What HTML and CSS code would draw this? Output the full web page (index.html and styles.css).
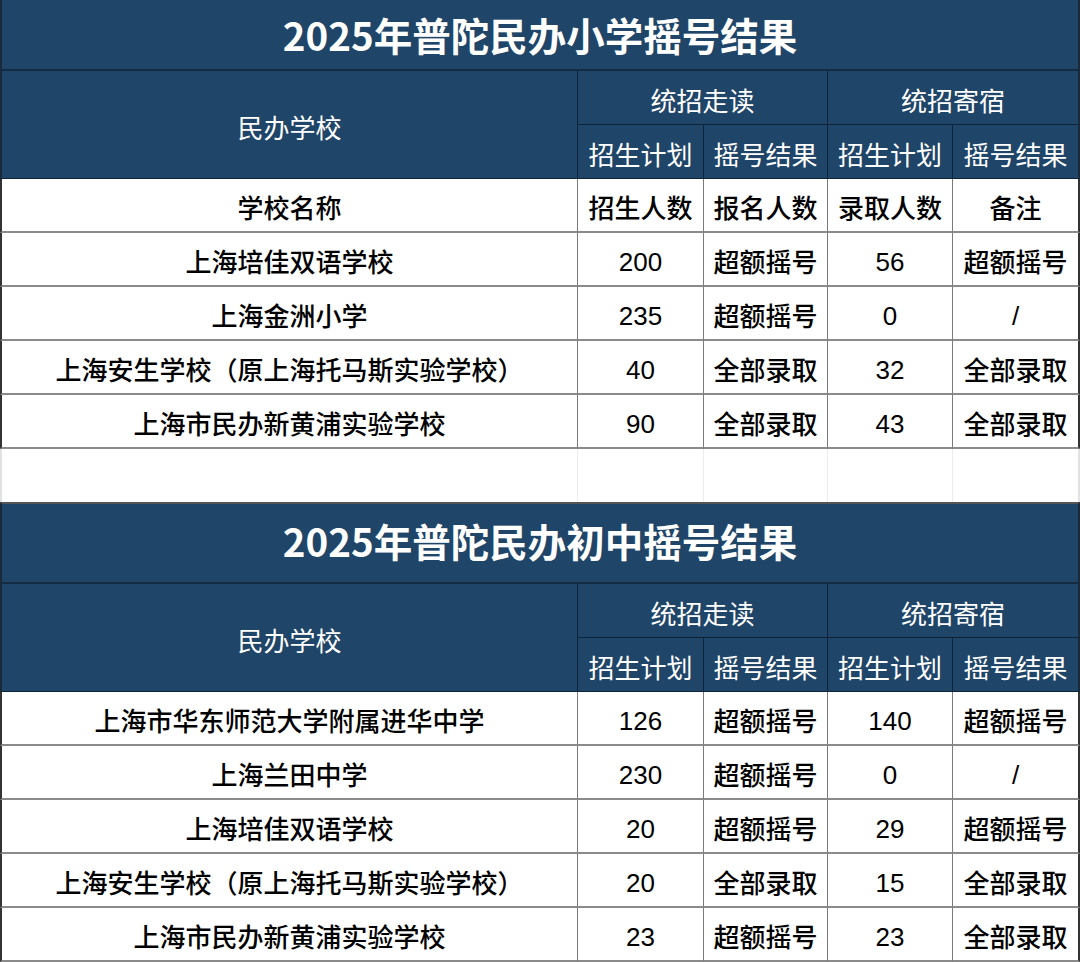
FILE: index.html
```html
<!DOCTYPE html>
<html lang="zh-CN">
<head>
<meta charset="utf-8">
<title>2025年普陀民办摇号结果</title>
<link rel="stylesheet" href="styles.css">
</head>
<body>
<div class="page">
  <section class="sheet">
    <div class="title t1">2025年普陀民办小学摇号结果</div>
    <div class="grid">
      <div class="c h first span-r2">民办学校</div>
      <div class="c h span-c2">统招走读</div>
      <div class="c h span-c2 last">统招寄宿</div>
      <div class="c h">招生计划</div>
      <div class="c h">摇号结果</div>
      <div class="c h">招生计划</div>
      <div class="c h last">摇号结果</div>

      <div class="c d first">学校名称</div>
      <div class="c d">招生人数</div>
      <div class="c d">报名人数</div>
      <div class="c d">录取人数</div>
      <div class="c d last">备注</div>

      <div class="c d first">上海培佳双语学校</div>
      <div class="c d num">200</div>
      <div class="c d">超额摇号</div>
      <div class="c d num">56</div>
      <div class="c d last">超额摇号</div>

      <div class="c d first">上海金洲小学</div>
      <div class="c d num">235</div>
      <div class="c d">超额摇号</div>
      <div class="c d num">0</div>
      <div class="c d last num">/</div>

      <div class="c d first">上海安生学校（原上海托马斯实验学校）</div>
      <div class="c d num">40</div>
      <div class="c d">全部录取</div>
      <div class="c d num">32</div>
      <div class="c d last">全部录取</div>

      <div class="c d first">上海市民办新黄浦实验学校</div>
      <div class="c d num">90</div>
      <div class="c d">全部录取</div>
      <div class="c d num">43</div>
      <div class="c d last">全部录取</div>
    </div>
  </section>

  <div class="grid gap">
    <div class="c g first"></div>
    <div class="c g"></div>
    <div class="c g"></div>
    <div class="c g"></div>
    <div class="c g last"></div>
  </div>

  <section class="sheet">
    <div class="title t2">2025年普陀民办初中摇号结果</div>
    <div class="grid">
      <div class="c h first span-r2">民办学校</div>
      <div class="c h span-c2">统招走读</div>
      <div class="c h span-c2 last">统招寄宿</div>
      <div class="c h">招生计划</div>
      <div class="c h">摇号结果</div>
      <div class="c h">招生计划</div>
      <div class="c h last">摇号结果</div>

      <div class="c d first">上海市华东师范大学附属进华中学</div>
      <div class="c d num">126</div>
      <div class="c d">超额摇号</div>
      <div class="c d num">140</div>
      <div class="c d last">超额摇号</div>

      <div class="c d first">上海兰田中学</div>
      <div class="c d num">230</div>
      <div class="c d">超额摇号</div>
      <div class="c d num">0</div>
      <div class="c d last num">/</div>

      <div class="c d first">上海培佳双语学校</div>
      <div class="c d num">20</div>
      <div class="c d">超额摇号</div>
      <div class="c d num">29</div>
      <div class="c d last">超额摇号</div>

      <div class="c d first">上海安生学校（原上海托马斯实验学校）</div>
      <div class="c d num">20</div>
      <div class="c d">全部录取</div>
      <div class="c d num">15</div>
      <div class="c d last">全部录取</div>

      <div class="c d first">上海市民办新黄浦实验学校</div>
      <div class="c d num">23</div>
      <div class="c d">超额摇号</div>
      <div class="c d num">23</div>
      <div class="c d last">全部录取</div>
    </div>
  </section>
</div>
</body>
</html>
```

FILE: styles.css
```css
* {
  box-sizing: border-box;
}

html, body {
  margin: 0;
  padding: 0;
  background: #ffffff;
}

.page {
  width: 1080px;
  font-family: "Liberation Sans", "Noto Sans CJK SC", sans-serif;
  font-size: 26px;
  font-weight: 500;
  color: #000000;
}

.title {
  background: #1f4568;
  color: #ffffff;
  font-family: "Noto Sans CJK SC", sans-serif;
  font-weight: 700;
  font-size: 38.5px;
  display: flex;
  align-items: center;
  justify-content: center;
  border-left: 2px solid #1a2a3a;
  border-right: 2px solid #1a2a3a;
  border-bottom: 2px solid #132c44;
}

.t1 {
  height: 71px;
  padding-bottom: 2px;
}

.t2 {
  height: 82px;
  border-top: 2px solid #555555;
  padding-bottom: 6px;
}

.grid {
  display: grid;
  grid-template-columns: 578px 126px 124px 125px 127px;
  grid-auto-rows: 54px;
}

.c {
  display: flex;
  align-items: center;
  justify-content: center;
  white-space: nowrap;
  border-right: 1px solid #7a7a7a;
  border-bottom: 2px solid #8a8a8a;
  padding-top: 2px;
}

.c.first {
  border-left: 2px solid #333333;
}

.c.last {
  border-right: 2px solid #333333;
}

.h {
  background: #1f4568;
  color: #ffffff;
  font-weight: 400;
  border-right: 1px solid #0f2338;
  border-bottom: 1px solid #0f2338;
  padding-top: 3px;
}

.h.first {
  border-left: 2px solid #1a2a3a;
}

.h.last {
  border-right: 2px solid #1a2a3a;
}

.span-r2 {
  grid-row: span 2;
}

.span-c2 {
  grid-column: span 2;
}

.d {
  background: #ffffff;
}

.num {
  font-family: "Liberation Sans", sans-serif;
  padding-top: 6px;
}

.gap {
  grid-auto-rows: 53px;
}

.g {
  border-right: 1px solid #ececec;
  border-bottom: none;
}

.g.first {
  border-left: 2px solid #e2e2e2;
}

.g.last {
  border-right: 2px solid #e2e2e2;
}
```
